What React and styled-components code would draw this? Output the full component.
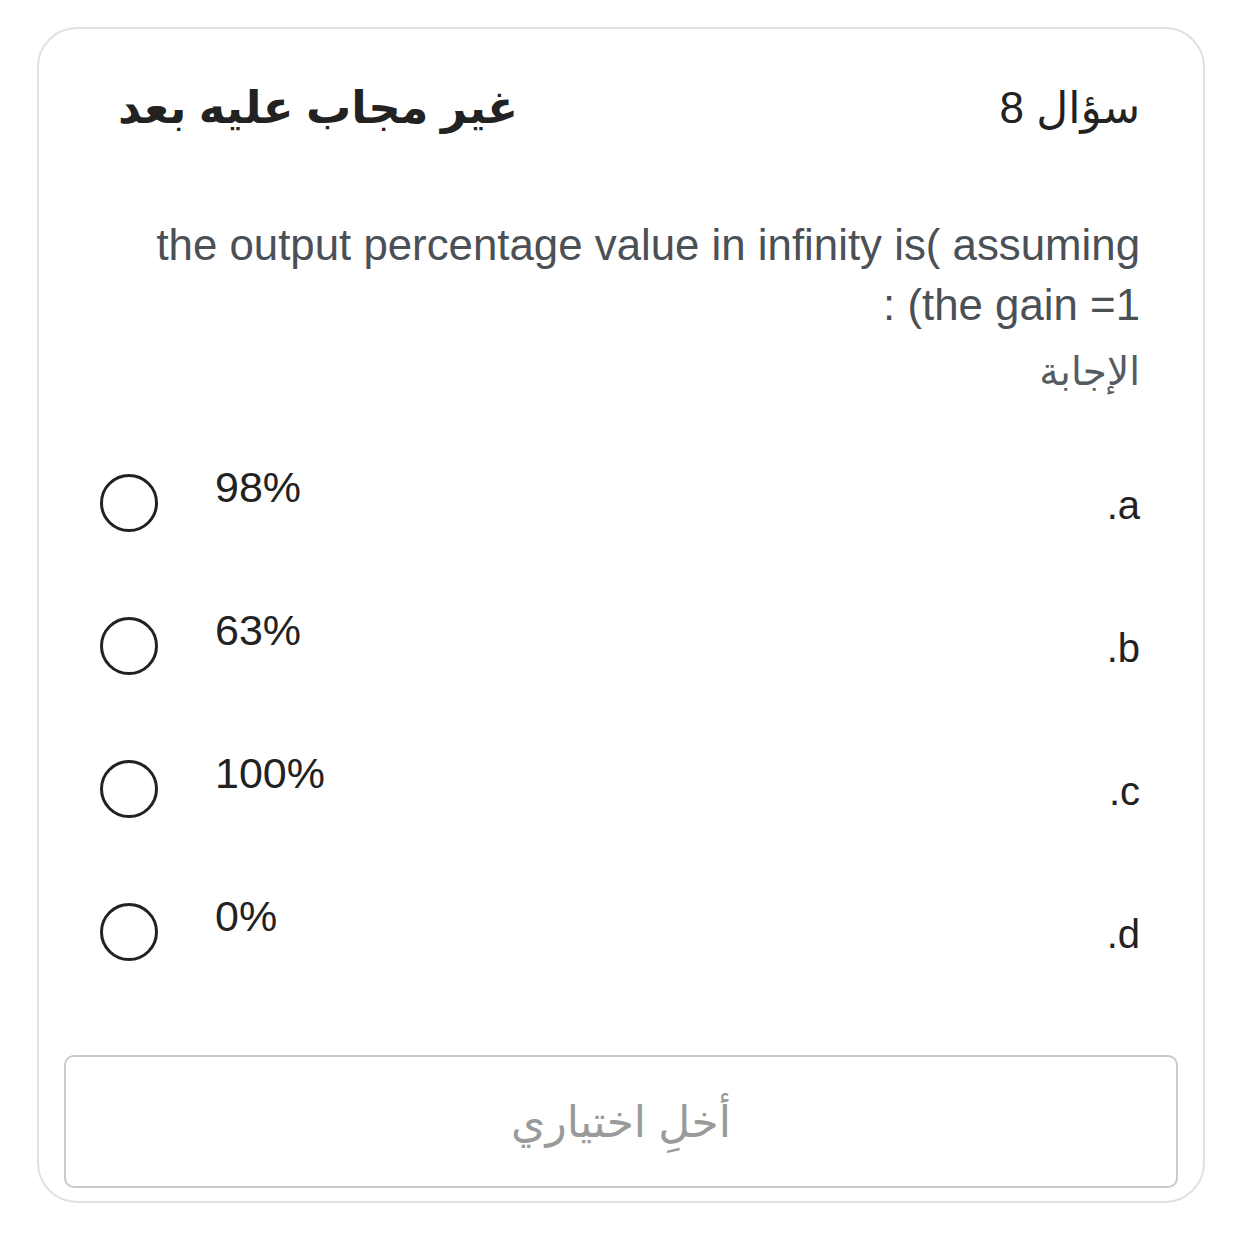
import React from 'react';
import styled, { createGlobalStyle } from 'styled-components';

const Global = createGlobalStyle`
  body {
    margin: 0;
    background: #fff;
    font-family: "Liberation Sans", "DejaVu Sans", sans-serif;
  }
`

const Card = styled.section`
  direction: rtl;
  box-sizing: border-box;
  width: 1168px;
  height: 1176px;
  margin: 27px 0 0 37px;
  padding: 0 25px 13px;
  border: 2px solid #dfe1e5;
  border-radius: 40px;
  background: #fff;
`
const Header = styled.header`
  display: flex;
  justify-content: space-between;
  align-items: center;
  height: 56px;
  margin-top: 51px;
  padding: 0 38px 0 54px;
  color: #222;
`
const QNumber = styled.h2`
  margin: 0;
  font-size: 44px;
  font-weight: 400;
  line-height: 56px;
`
const QState = styled.div`
  font-size: 45px;
  font-weight: 700;
  line-height: 56px;
`
const Question = styled.div`
  margin-top: 79px;
  padding: 0 38px 0 36px;
  color: #4b5057;
`
const Prompt = styled.p`
  margin: 0;
  font-size: 43.8px;
  line-height: 60px;
`
const AnswerLabel = styled.div`
  margin-top: 12px;
  font-size: 39px;
  line-height: 50px;
  color: #555b62;
`
const Options = styled.ul`
  list-style: none;
  margin: 66px 0 0;
  padding: 0 38px 0 36px;
  display: flex;
  flex-direction: column;
  gap: 74px;
`
const Option = styled.li`
  display: flex;
  justify-content: space-between;
  align-items: flex-start;
  height: 69px;
  color: #222;
`
const Letter = styled.span`
  margin-top: 18px;
  font-size: 40px;
  line-height: 48px;
`
const Choice = styled.label`
  display: flex;
  align-items: flex-start;
  gap: 57px;
  cursor: pointer;
`
const Value = styled.span`
  font-size: 43px;
  line-height: 48px;
`
const Radio = styled.span`
  box-sizing: border-box;
  width: 58px;
  height: 58px;
  margin-top: 11px;
  border: 3px solid #222;
  border-radius: 50%;
`
const Clear = styled.button`
  display: flex;
  align-items: center;
  justify-content: center;
  box-sizing: border-box;
  width: 100%;
  height: 133px;
  margin-top: 94px;
  border: 2px solid #c9cacd;
  border-radius: 10px;
  background: #fff;
  color: #9a9a9a;
  font-family: inherit;
  font-size: 44px;
`

const options = [
  { letter: 'a.', value: '98%' },
  { letter: 'b.', value: '63%' },
  { letter: 'c.', value: '100%' },
  { letter: 'd.', value: '0%' },
]

// the opening paren sits in its own isolate so the closing one is not paired with it
const prompt = 'the output percentage value in infinity is\u2066(\u2069 assuming the gain =1) :'

export default function App() {
  return (
    <>
      <Global />
      <Card>
        <Header>
          <QNumber>سؤال 8</QNumber>
          <QState>غير مجاب عليه بعد</QState>
        </Header>
        <Question>
          <Prompt>{prompt}</Prompt>
          <AnswerLabel>الإجابة</AnswerLabel>
        </Question>
        <Options>
          {options.map(({ letter, value }) =>
            <Option key={letter}>
              <Letter>{letter}</Letter>
              <Choice>
                <Value>{value}</Value>
                <Radio />
              </Choice>
            </Option>
          )}
        </Options>
        <Clear>أخلِ اختياري</Clear>
      </Card>
    </>
  )
}
